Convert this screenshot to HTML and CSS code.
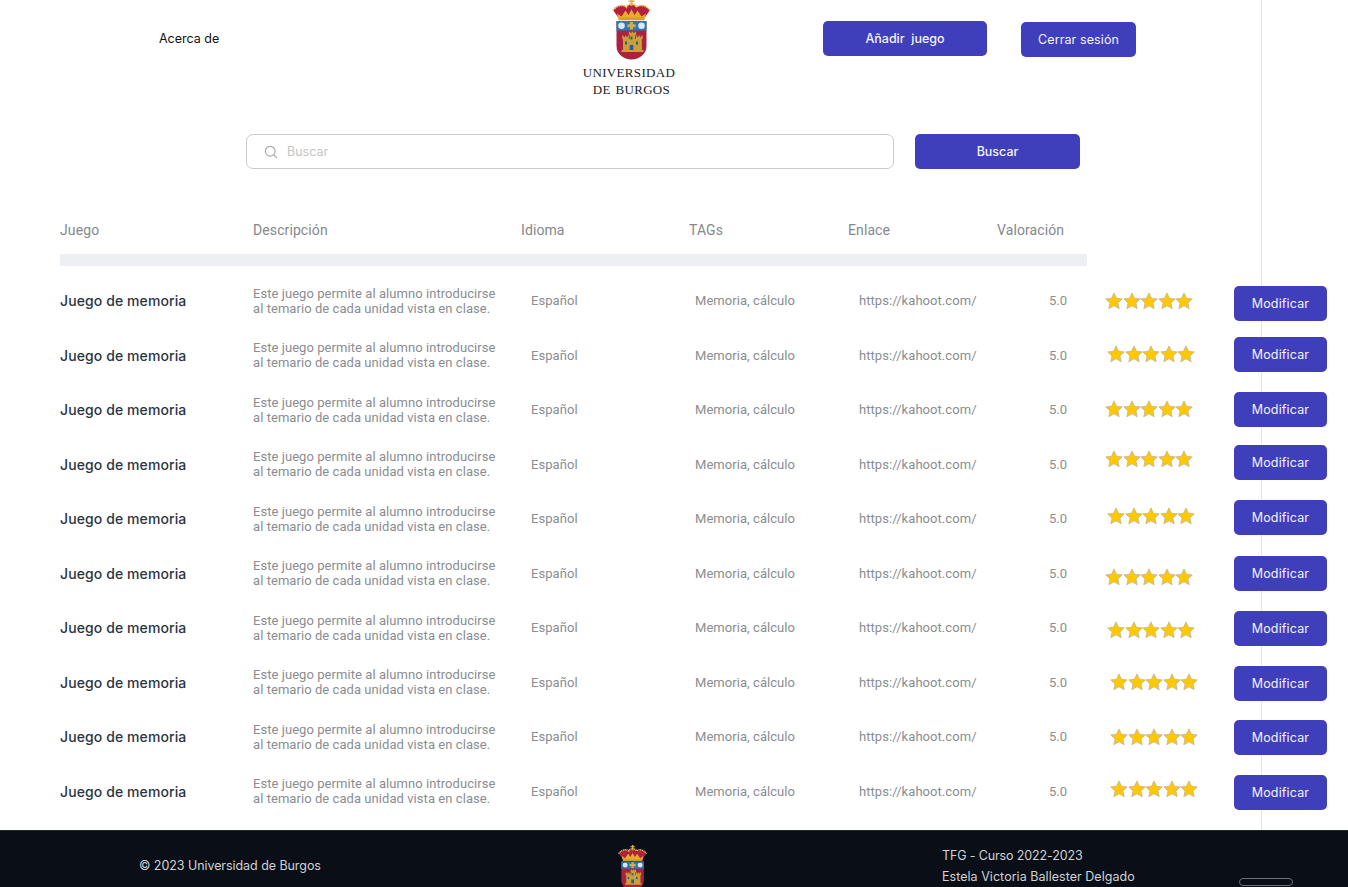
FILE: index.html
```html
<!DOCTYPE html>
<html lang="es">
<head>
<meta charset="utf-8">
<title>Juegos</title>
<link rel="stylesheet" href="styles.css">
</head>
<body>
<svg class="defs" width="0" height="0" aria-hidden="true">
  <defs>
    <symbol id="crest" viewBox="0 0 40 62">
      <path d="M4.500 22 H34.500 V47 C34.500 55 27.500 60.500 19.500 60.500 C11.500 60.500 4.500 55 4.500 47 Z" fill="#a92340"/>
      <rect x="4.500" y="22" width="30" height="9.500" fill="#2a78b8"/>
      <circle cx="9.500" cy="26.800" r="3.300" fill="#dfe7ec"/><circle cx="29.500" cy="26.800" r="3.300" fill="#dfe7ec"/>
      <path d="M18 23h3v2.300h2.600v3h-2.600v2.300h-3v-2.300h-2.600v-3h2.600z" fill="#cfae48"/>
      <path d="M9.500 53 V51 h1.500 V40 h-.8v-3.500h1.500v1.500h1.300v-1.500h1.300v1.500h1.300v-1.500h1.300V40 h.8 V36 h-.8v-3.300h1.500v1.300h1.300v-1.300h1.500v1.300h1.300v-1.300h1.500V36 h-.8 V40 h.8v-3.500h1.300v1.500h1.300v-1.500h1.300v1.500h1.300v-1.500h1.500V40 h-.8 V51 h1.500v2 Z" fill="#c9a035"/>
      <rect x="17.700" y="46" width="3.600" height="5" fill="#2a5c9c"/>
      <rect x="13" y="42.500" width="2" height="3" fill="#2a5c9c"/><rect x="24" y="42.500" width="2" height="3" fill="#2a5c9c"/>
      <rect x="18.500" y="37.500" width="2" height="3" fill="#2a5c9c"/>
      <path d="M1 11 C6 5 12 6 14.500 8.500 C16 4.500 23 4.500 24.500 8.500 C27 6 33 5 38 11 L32.500 19 H6.500 Z" fill="#b5203c"/>
      <path d="M.8 11.500 C6 5 12 5.500 14.500 8 C16 3.800 23 3.800 24.500 8 C27 5.500 33 5 38.200 11.500" fill="none" stroke="#e9c860" stroke-width="1.800" stroke-dasharray="1.600 .8"/>
      <path d="M5 14.500 L9.500 17.500 L13.500 11.500 L16.500 16 L19.500 10.500 L22.500 16 L25.500 11.500 L29.500 17.500 L34 14.500 L32.500 20 H6.500 Z" fill="#e6ad2e"/>
      <rect x="6.500" y="18.500" width="26" height="2.800" fill="#d99e24"/>
      <path d="M18.500 0h2v1.500h2V3h-2v4h-2V3h-2V1.500h2z" fill="#d8b24a"/>
    </symbol>
    <symbol id="star" viewBox="0 0 24 24">
      <path d="M12 1.200 L15.300 8.300 L23 9.200 L17.300 14.500 L18.900 22.300 L12 18.400 L5.100 22.300 L6.700 14.500 L1 9.200 L8.700 8.300 Z" fill="#ffc800" stroke="#b9b29c" stroke-width="1"/>
    </symbol>
  </defs>
</svg>

<div class="page">
  <header class="topbar">
    <a class="about">Acerca de</a>
    <div class="logo">
      <svg class="logo-crest" width="40" height="62"><use href="#crest"/></svg>
      <div class="logo-text">UNIVERSIDAD<span class="logo-line2">DE BURGOS</span></div>
    </div>
    <button class="btn btn-add">Añadir&nbsp; juego</button>
    <button class="btn btn-logout">Cerrar sesión</button>
  </header>

  <form class="search">
    <label class="search-box">
      <svg width="14" height="14" viewBox="0 0 14 14" fill="none" stroke="#a9adb3" stroke-width="1.200"><circle cx="6.200" cy="6.200" r="4.900"/><path d="M9.800 9.800 L13 13"/></svg>
      <span>Buscar</span>
    </label>
    <button class="btn btn-search" type="button">Buscar</button>
  </form>

  <main class="table">
    <div class="grid head">
      <div>Juego</div><div>Descripción</div><div>Idioma</div><div>TAGs</div><div>Enlace</div><div>Valoración</div>
    </div>
    <div class="band"></div>
    <div id="rows"></div>
  </main>

  <footer class="footer">
    <div class="copy">© 2023 Universidad de Burgos</div>
    <svg class="foot-crest" width="30" height="46.500"><use href="#crest"/></svg>
    <div class="credits"><div class="course">TFG - Curso 2022-2023</div><div class="author">Estela Victoria Ballester Delgado</div></div>
    <div class="pill"></div>
  </footer>
</div>
<template id="row-tpl">
  <div class="grid row">
    <div class="name">Juego de memoria</div>
    <div class="desc">Este juego permite al alumno introducirse<br>al temario de cada unidad vista en clase.</div>
    <div class="cell lang">Español</div>
    <div class="cell tags">Memoria, cálculo</div>
    <div class="cell link">https://kahoot.com/</div>
    <div class="cell score">5.0</div>
    <div class="stars">
      <svg width="18" height="18"><use href="#star"/></svg><svg width="18" height="18"><use href="#star"/></svg><svg width="18" height="18"><use href="#star"/></svg><svg width="18" height="18"><use href="#star"/></svg><svg width="18" height="18"><use href="#star"/></svg>
    </div>
    <button class="btn btn-edit">Modificar</button>
  </div>
</template>
<script>
  var tpl = document.getElementById('row-tpl'), rows = document.getElementById('rows');
  for (var i = 0; i < 10; i++) rows.appendChild(tpl.content.cloneNode(true));
</script>
</body>
</html>
```
FILE: styles.css
```css
* { box-sizing: border-box; }
html, body { margin: 0; padding: 0; }
body { background: #fff; font-family: "Inter", "Liberation Sans", sans-serif; overflow: hidden; }
.defs { position: absolute; }
.page {
  width: 1348px; height: 887px; display: flex; flex-direction: column; overflow: hidden;
  background: linear-gradient(#e3e5e8, #e3e5e8) 1261px 0 / 1px 830px no-repeat;
}
.btn {
  border: 0; background: #3f3fbb; color: #f4f4fb; border-radius: 5px; font-family: "Inter", sans-serif;
  font-weight: 500; font-size: 12.500px; padding: 0; flex: none;
}

.topbar { height: 134px; flex: none; display: flex; align-items: flex-start; }
.about { font-size: 12.500px; color: #111; margin: 31px 0 0 159px; line-height: 16px; width: 60px; white-space: nowrap; }
.logo { width: 92px; margin-left: 364px; margin-top: -1px; display: flex; flex-direction: column; align-items: center; }
.logo-crest { display: block; margin-left: 5px; }
.logo-text { font-family: "Liberation Serif", serif; font-size: 13px; line-height: 16.500px; color: #222; letter-spacing: .33px; word-spacing: 1px; margin-top: 4px; white-space: nowrap; text-align: center; }
.logo-line2 { display: block; margin-left: 5px; }
.btn-add { width: 164px; height: 35px; margin: 20.500px 0 0 148px; }
.btn-logout { width: 115px; height: 35px; margin: 21.500px 0 0 34px; font-weight: 400; letter-spacing: .1px; }

.search { display: flex; margin-left: 246px; gap: 21px; height: 35px; flex: none; }
.search-box {
  width: 648px; height: 35px; border: 1px solid #c9cbce; border-radius: 7px; display: flex; align-items: center;
  padding-left: 17px; gap: 9px; color: #c3c5c8; font-size: 12.500px;
}
.btn-search { width: 165px; height: 35px; padding-bottom: 1px; }

.table { flex: none; margin-top: 43px; padding-left: 60px; }
.grid { display: grid; grid-template-columns: 193px 268px 168px 159px 149px 110px 127px 93px; align-items: center; }
.head { height: 42px; font-family: "Roboto", sans-serif; font-weight: 400; font-size: 14px; letter-spacing: .1px; color: #85888c; align-items: start; padding-top: 10px; }
.band { width: 1027px; height: 12px; background: #edf0f3; }
#rows { padding-top: 7.300px; }
.row { height: 54.500px; }
.name { font-size: 14px; font-weight: 500; color: #2c3440; letter-spacing: .1px; }
.desc { font-family: "Roboto", sans-serif; font-size: 13px; letter-spacing: .06px; line-height: 15px; color: #8a8d91; white-space: nowrap; }
.cell { font-family: "Roboto", sans-serif; font-size: 13px; letter-spacing: .06px; color: #8a8d91; white-space: nowrap; }
.lang { padding-left: 10px; }
.tags { padding-left: 6px; }
.link { padding-left: 11px; }
.score { padding-left: 52px; }
.stars { display: flex; height: 18px; margin-left: -2px; }
.stars svg { display: block; margin-right: -.500px; }
.btn-edit { width: 93px; height: 35px; font-weight: 400; letter-spacing: .15px; }

/* hand-placed stickers and buttons: each row in the reference sits slightly differently */
.row:nth-child(1) .stars { margin-top: 0; }
.row:nth-child(2) .stars { margin-left: 0; margin-top: -3px; }
.row:nth-child(3) .stars { margin-top: -1px; }
.row:nth-child(4) .stars { margin-top: -11px; }
.row:nth-child(5) .stars { margin-left: 0; margin-top: -5px; }
.row:nth-child(6) .stars { margin-top: 7px; }
.row:nth-child(7) .stars { margin-left: 0; margin-top: 4px; }
.row:nth-child(8) .stars { margin-left: 3px; margin-top: -1px; }
.row:nth-child(9) .stars { margin-left: 3px; margin-top: 0; }
.row:nth-child(10) .stars { margin-left: 3px; margin-top: -5px; }
.row:nth-child(1) .btn-edit { margin-top: 5px; }
.row:nth-child(2) .btn-edit { margin-top: -2px; }
.row:nth-child(4) .btn-edit { margin-top: -4px; }
.row:nth-child(5) .btn-edit { margin-top: -2px; }
.row:nth-child(7) .btn-edit { margin-top: 2px; }
.row:nth-child(8) .btn-edit { margin-top: 3px; }
.row:nth-child(9) .btn-edit { margin-top: 1px; }
.row:nth-child(10) .btn-edit { margin-top: 2px; }

.footer { margin-top: auto; height: 57px; flex: none; background: #0a0e17; border-top: 1px solid #22262e; display: flex; align-items: flex-start; color: #d0d2d6; font-size: 12.500px; overflow: hidden; position: relative; }
.copy { margin: 27px 0 0 139px; width: 200px; letter-spacing: -.06px; line-height: 16px; white-space: nowrap; }
.foot-crest { margin: 14px 0 0 279px; flex: none; }
.credits { margin: 13.500px 0 0 294px; line-height: 21.500px; white-space: nowrap; width: 297px; }
.course { letter-spacing: -.13px; }
.author { letter-spacing: .04px; }
.pill { position: absolute; left: 1239px; top: 46.500px; width: 54px; height: 8px; border: 1px solid #6b6e74; border-radius: 4px; }
```
